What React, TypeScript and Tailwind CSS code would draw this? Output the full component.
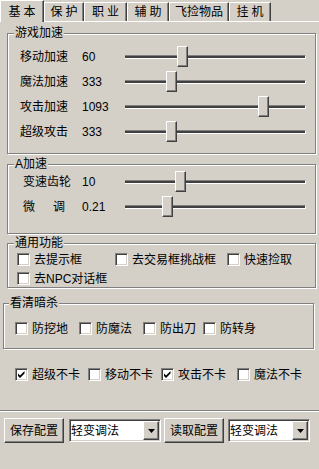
import type { ReactNode } from 'react';

type SliderRow = { label: ReactNode; value: string; pos: number };

const speedRows: SliderRow[] = [
  { label: '移动加速', value: '60', pos: 52 },
  { label: '魔法加速', value: '333', pos: 41 },
  { label: '攻击加速', value: '1093', pos: 133 },
  { label: '超级攻击', value: '333', pos: 41 },
];

const gearRows: SliderRow[] = [
  { label: '变速齿轮', value: '10', pos: 50 },
  {
    label: (
      <>
        微<span className="ml-[18px]">调</span>
      </>
    ),
    value: '0.21',
    pos: 37,
  },
];

const tabs = [
  { label: '基本', width: 'w-[44px]', spaced: true },
  { label: '保护', width: 'w-[40px]', spaced: true },
  { label: '职业', width: 'w-[43px]', spaced: true },
  { label: '辅助', width: 'w-[42px]', spaced: true },
  { label: '飞捡物品', width: 'w-[60px]', spaced: false },
  { label: '挂机', width: 'w-[42px]', spaced: true },
];

const raised =
  'border border-t-white border-l-white border-r-[#404040] border-b-[#404040] shadow-[inset_-1px_-1px_0_#808080]';
const sunken =
  'border border-t-[#808080] border-l-[#808080] border-r-white border-b-white shadow-[inset_1px_1px_0_#404040,inset_-1px_-1px_0_#d4d0c8]';

const GroupBox = ({
  title,
  className,
  titleClass = 'left-[6px]',
  children,
}: {
  title: string;
  className: string;
  titleClass?: string;
  children: ReactNode;
}) => (
  <div
    className={`relative box-border border border-[#808080] shadow-[inset_1px_1px_0_#fff,1px_1px_0_#fff] ${className}`}
  >
    <span
      className={`absolute top-[-7px] bg-[#d4d0c8] px-[1px] text-[12px] leading-[12px] ${titleClass}`}
    >
      {title}
    </span>
    {children}
  </div>
);

const Slider = ({ row, labelWidth }: { row: SliderRow; labelWidth: string }) => (
  <div className="flex h-[25px] items-center">
    <span className={`${labelWidth} shrink-0`}>{row.label}</span>
    <span className="w-[43px] shrink-0">{row.value}</span>
    <div className="relative flex h-[21px] w-[181px] shrink-0 items-center">
      <div className="box-border h-[4px] w-full border-t border-r border-b border-t-[#808080] border-r-white border-b-white bg-[#404040]" />
      <div
        className={`absolute top-0 box-border h-[21px] w-[11px] bg-[#d4d0c8] ${raised}`}
        style={{ left: row.pos }}
      />
    </div>
  </div>
);

const CheckBox = ({
  label,
  checked = false,
  className = '',
}: {
  label: string;
  checked?: boolean;
  className?: string;
}) => (
  <div className={`flex shrink-0 items-center gap-[4px] ${className}`}>
    <span
      className={`box-border flex h-[13px] w-[13px] shrink-0 items-center justify-center bg-white ${sunken}`}
    >
      {checked && (
        <svg width="9" height="9" viewBox="0 0 9 9">
          <path d="M1 3.5 L3 5.5 L7.5 1 L7.5 3.5 L3 8 L1 6 Z" fill="#000" />
        </svg>
      )}
    </span>
    <span className="whitespace-nowrap">{label}</span>
  </div>
);

const Select = ({ value, width }: { value: string; width: string }) => (
  <div className={`box-border mt-[1px] flex h-[23px] items-stretch bg-white ${width} ${sunken}`}>
    <span className="flex flex-1 items-center pl-[1px] pt-[1px] text-[12px]">{value}</span>
    <span
      className={`m-[1px] box-border flex w-[16px] items-center justify-center bg-[#d4d0c8] ${raised}`}
    >
      <svg width="7" height="4" viewBox="0 0 7 4">
        <path d="M0 0 H7 L3.5 4 Z" fill="#000" />
      </svg>
    </span>
  </div>
);

const Button = ({ label }: { label: string }) => (
  <button
    className={`box-border flex h-[25px] w-[60px] items-center justify-center bg-[#d4d0c8] text-[12px] ${raised}`}
  >
    {label}
  </button>
);

export default function App() {
  return (
    <div className="h-[469px] w-[319px] overflow-hidden bg-[#d4d0c8] font-['Liberation_Sans','Noto_Sans_CJK_SC',sans-serif] text-[12px] leading-[14px] text-black">
      <div className="relative z-10 flex h-[21px] items-end">
        {tabs.map((tab, i) => (
          <div
            key={tab.label}
            className={`box-border flex items-center justify-center border-t border-l border-r border-t-white border-l-white border-r-[#404040] bg-[#d4d0c8] shadow-[inset_-1px_0_0_#808080] ${tab.width} ${
              i === 0 ? 'mb-[-1px] h-[22px]' : 'h-[19px]'
            }`}
          >
            <span className={tab.spaced ? 'pl-[3px] tracking-[3px]' : ''}>{tab.label}</span>
          </div>
        ))}
      </div>

      <div className="border-t border-white">
        <GroupBox title="游戏加速" className="mt-[11px] ml-[7px] h-[121px] w-[309px] pt-[10px] pl-[12px]">
          {speedRows.map((row, i) => (
            <Slider key={i} row={row} labelWidth="w-[62px]" />
          ))}
        </GroupBox>

        <GroupBox title="A加速" className="mt-[10px] ml-[7px] h-[70px] w-[309px] pt-[4px] pl-[15px]">
          {gearRows.map((row, i) => (
            <Slider key={i} row={row} labelWidth="w-[59px]" />
          ))}
        </GroupBox>

        <GroupBox title="通用功能" className="mt-[9px] ml-[7px] h-[45px] w-[309px] pt-[6px] pl-[9px]">
          <div className="flex h-[19px] items-center">
            <CheckBox label="去提示框" className="w-[98px]" />
            <CheckBox label="去交易框挑战框" className="w-[112px]" />
            <CheckBox label="快速捡取" />
          </div>
          <div className="flex h-[19px] items-center">
            <CheckBox label="去NPC对话框" />
          </div>
        </GroupBox>

        <GroupBox
          title="看清暗杀"
          titleClass="left-[5px]"
          className="mt-[15px] ml-[3px] h-[46px] w-[311px] pt-[15px] pl-[11px]"
        >
          <div className="flex h-[19px] items-center">
            <CheckBox label="防挖地" className="w-[64px]" />
            <CheckBox label="防魔法" className="w-[64px]" />
            <CheckBox label="防出刀" className="w-[60px]" />
            <CheckBox label="防转身" />
          </div>
        </GroupBox>

        <div className="mt-[16px] flex h-[19px] items-center pl-[15px]">
          <CheckBox label="超级不卡" checked className="w-[73px]" />
          <CheckBox label="移动不卡" className="w-[73px]" />
          <CheckBox label="攻击不卡" checked className="w-[76px]" />
          <CheckBox label="魔法不卡" />
        </div>

        <div className="mt-[26px] h-[2px] border-t border-b border-t-[#808080] border-b-white" />

        <div className="mt-[6px] flex items-start pl-[4px]">
          <Button label="保存配置" />
          <div className="ml-[5px]">
            <Select value="轻变调法" width="w-[92px]" />
          </div>
          <div className="ml-[3px]">
            <Button label="读取配置" />
          </div>
          <div className="ml-[4px]">
            <Select value="轻变调法" width="w-[82px]" />
          </div>
        </div>
      </div>
    </div>
  );
}
